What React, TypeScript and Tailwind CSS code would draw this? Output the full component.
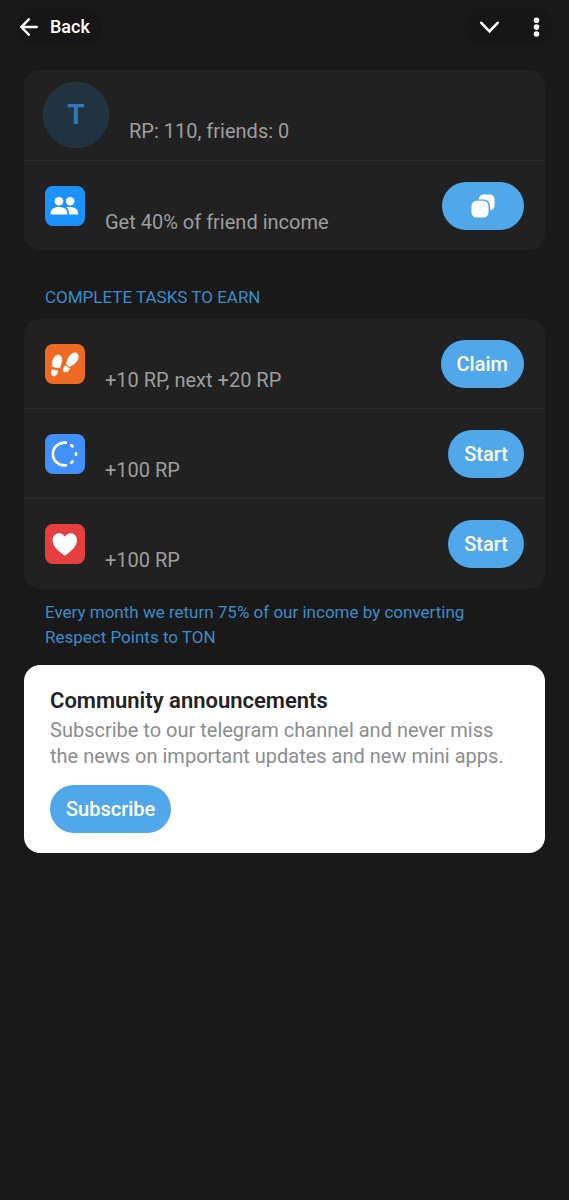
import React from "react";

interface Task {
  id: string;
  reward: string;
  action: string;
  tile: string;
  icon: React.ReactNode;
}

const PeopleIcon = () => (
  <svg viewBox="0 0 40 40" className="size-10" fill="#fff" aria-hidden="true">
    <circle cx="14" cy="15.3" r="4.3" />
    <circle cx="25.2" cy="15.3" r="4.2" />
    <path d="M5.8 28.5V26.6C5.8 22.8 10.2 21.1 14 21.1s8.2 1.7 8.2 5.5v1.9z" />
    <path d="M23.9 28.5v-2.1c0-2.2-1.1-3.9-2.7-5.1 1.2-.2 2.6-.3 4-.2 3.8.2 7.8 1.8 7.8 5.5v1.9z" />
  </svg>
);

const StepsIcon = () => (
  <svg
    viewBox="0 0 40 40"
    className="size-10"
    fill="#fff"
    stroke="#fff"
    strokeWidth=".6"
    strokeLinejoin="round"
    aria-hidden="true"
  >
    <path d="M13.600 11c2.700.4 3.700 3 3.200 6.200-.3 1.700-1.100 3.400-1.500 5.200-.2.900-.8 1.500-1.700 1.400l-4.800-.8c-.9-.1-1.300-.8-1.400-1.700-.5-5.300 2.500-10.800 6.200-10.300z" />
    <path d="M7.200 25.800l5.300.9c.4 2.800-1.100 5.400-3.600 5.200-2.500-.2-3.300-3-1.700-6.100z" />
    <path d="M31.600 9.300c2.400 1.400 2.200 4.900.2 8-1.600 2.500-4 3.500-6 4.700-.8.500-1.600.4-2.300 0l-1.300-.9c-.8-.6-.9-1.300-.6-2.200 1-3.400 1.700-5.700 4-7.900 1.900-1.900 4.300-2.800 6-1.700z" />
    <path d="M20.300 21.700l4.400 2.800c-.3 2-2.500 3.800-4.700 3.600-2.500-.4-2.500-3.700.3-6.400z" />
  </svg>
);

const RingIcon = () => (
  <svg
    viewBox="0 0 40 40"
    className="size-10"
    fill="none"
    stroke="#fff"
    strokeWidth="2.700"
    strokeLinecap="round"
    aria-hidden="true"
  >
    <path d="M20.800 8.700A11.400 11.400 0 1 0 20.800 31.300" />
    <path d="M26.300 11.200l1.300 1.300M31 19.300v1.400M27.600 27.500l-1.300 1.300" />
  </svg>
);

const HeartIcon = () => (
  <svg viewBox="0 0 40 40" className="size-10" fill="#fff" aria-hidden="true">
    <path d="M19.800 31.700C15.500 28.600 7.600 23.300 7.600 16.200 7.600 12.200 10.500 9.300 14 9.300c2.400 0 4.600 1.200 5.800 3.400 1.200-2.200 3.400-3.400 5.800-3.400 3.500 0 6.400 2.900 6.400 6.900 0 7.100-7.900 12.400-12.200 15.500z" />
  </svg>
);

const CopyIcon = () => (
  <svg viewBox="0 0 24 24" className="size-6" fill="#fff" aria-hidden="true">
    <path d="M7.700 5.400C8.100 2.300 9.800.5 13 .5h5.200c3.500 0 5.400 1.900 5.400 5.400v5.200c0 3.200-1.500 5-4.500 5.300v-3.800c0-4.800-2.400-7.200-7.200-7.200z" />
    <rect x=".500" y="6.700" width="17" height="16.800" rx="5.200" />
  </svg>
);

const tasks: Task[] = [
  {
    id: "daily",
    reward: "+10 RP, next +20 RP",
    action: "Claim",
    tile: "bg-[#ef6a22]",
    icon: <StepsIcon />,
  },
  {
    id: "story",
    reward: "+100 RP",
    action: "Start",
    tile: "bg-[#4290fc]",
    icon: <RingIcon />,
  },
  {
    id: "like",
    reward: "+100 RP",
    action: "Start",
    tile: "bg-[#e5403f]",
    icon: <HeartIcon />,
  },
];

const PillButton: React.FC<React.ComponentProps<"button">> = ({
  children,
  ...props
}) => (
  <button
    type="button"
    className="flex h-12 shrink-0 items-center justify-center rounded-full bg-[#50a7ea] px-4 text-xl font-medium text-white"
    {...props}
  >
    {children}
  </button>
);

interface RowProps {
  tile: string;
  icon: React.ReactNode;
  text: string;
  children: React.ReactNode;
}

const Row: React.FC<RowProps> = ({ tile, icon, text, children }) => (
  <li className="flex h-[90px] items-center gap-5 px-[21px]">
    <span className={`shrink-0 overflow-hidden rounded-lg ${tile}`}>{icon}</span>
    <p className="grow pt-8 text-xl leading-6 text-[#9e9e9e]">{text}</p>
    {children}
  </li>
);

const Header = () => (
  <header className="flex items-center justify-between px-4 pt-2">
    <button
      type="button"
      className="flex h-[38px] items-center gap-3 rounded-full bg-[#161616] pr-3 pl-1 text-lg font-medium text-white"
    >
      <svg
        viewBox="0 0 18 18"
        className="size-[18px]"
        fill="none"
        stroke="currentColor"
        strokeWidth="2.500"
        strokeLinecap="round"
        strokeLinejoin="round"
        aria-hidden="true"
      >
        <path d="M16.700 9H1.300M8.800 1.300L1.300 9l7.500 7.700" />
      </svg>
      Back
    </button>
    <div className="flex h-[38px] items-center gap-6 rounded-full bg-[#161616] pr-1 pl-3">
      <button type="button" aria-label="Minimize" className="text-white">
        <svg
          viewBox="0 0 24 24"
          className="size-6"
          fill="none"
          stroke="currentColor"
          strokeWidth="2.600"
          strokeLinecap="round"
          aria-hidden="true"
        >
          <path d="M4.300 7.800L12.500 16.300 20.700 7.800" />
        </svg>
      </button>
      <button type="button" aria-label="Menu" className="text-white">
        <svg viewBox="0 0 24 24" className="size-6" fill="currentColor" aria-hidden="true">
          <circle cx="11.500" cy="5.200" r="2.800" />
          <circle cx="11.500" cy="12.100" r="2.800" />
          <circle cx="11.500" cy="19" r="2.800" />
        </svg>
      </button>
    </div>
  </header>
);

export default function App() {
  return (
    <div className="min-h-screen bg-[#191919] font-[Roboto,sans-serif]">
      <Header />

      <main className="px-6 pt-6">
        <ul className="rounded-2xl bg-[#212121] [&>li+li]:border-t [&>li+li]:border-[#2c2c2c]">
          <li className="flex h-[90px] items-center gap-5 px-[19px]">
            <span className="flex size-[66px] shrink-0 items-center justify-center rounded-full border border-[#2b3b45] bg-[#213340] text-[28px] font-bold text-[#2f79b9]">
              T
            </span>
            <p className="pt-8 text-xl leading-6 text-[#9e9e9e]">
              RP: 110, friends: 0
            </p>
          </li>
          <Row
            tile="bg-[#1d92fc]"
            icon={<PeopleIcon />}
            text="Get 40% of friend income"
          >
            <button
              type="button"
              aria-label="Copy invite link"
              className="flex h-12 w-[82px] shrink-0 items-center justify-center rounded-full bg-[#50a7ea]"
            >
              <CopyIcon />
            </button>
          </Row>
        </ul>

        <h2 className="px-[21px] pt-[35px] pb-[10px] text-[17px] leading-6 text-[#3c8dc9] uppercase">
          Complete tasks to earn
        </h2>
        <ul className="divide-y divide-[#2c2c2c] rounded-2xl bg-[#212121]">
          {tasks.map((task) => (
            <Row key={task.id} tile={task.tile} icon={task.icon} text={task.reward}>
              <PillButton>{task.action}</PillButton>
            </Row>
          ))}
        </ul>
        <p className="px-[21px] pt-[11px] pb-[15px] text-[17px] leading-[25px] text-[#3c8dc9]">
          Every month we return 75% of our income by converting Respect Points
          to TON
        </p>

        <section className="rounded-2xl bg-white px-[26px] pt-5 pb-5">
          <h2 className="text-[22px] leading-8 font-semibold text-[#222222]">
            Community announcements
          </h2>
          <p className="pb-4 text-xl leading-[26px] text-[#8a8d8e]">
            Subscribe to our telegram channel and never miss the news on
            important updates and new mini apps.
          </p>
          <PillButton>Subscribe</PillButton>
        </section>
      </main>
    </div>
  );
}
